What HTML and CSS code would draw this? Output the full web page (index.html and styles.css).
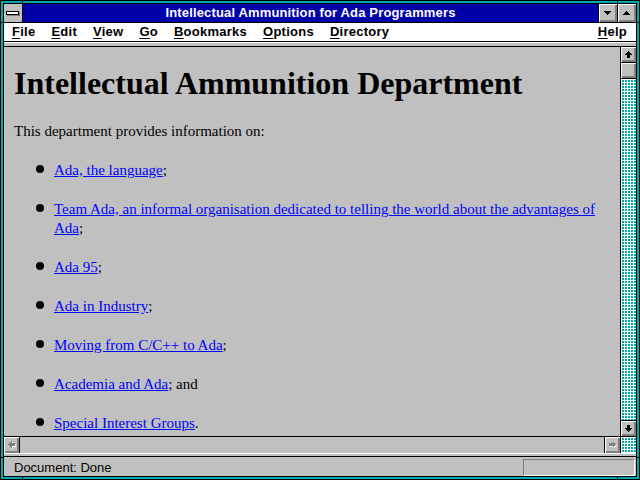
FILE: index.html
```html
<!DOCTYPE html>
<html lang="en">
<head>
    <meta charset="UTF-8">
    <title>Intellectual Ammunition for Ada Programmers</title>
    <link rel="stylesheet" href="styles.css">
</head>
<body>
    <div class="window">
        <div class="inner">
            <!-- title bar -->
            <div class="titlebar">
                <div class="sysbox"><span class="sysbar"></span></div>
                <div class="title">Intellectual Ammunition for Ada Programmers</div>
                <div class="tbtn">
                    <svg width="7" height="4" viewBox="0 0 7 4" shape-rendering="crispEdges"><polygon points="0,0 7,0 3.5,4" fill="#000"/></svg>
                </div>
                <div class="tbtn">
                    <svg width="7" height="4" viewBox="0 0 7 4" shape-rendering="crispEdges"><polygon points="3.5,0 7,4 0,4" fill="#000"/></svg>
                </div>
            </div>

            <!-- menu -->
            <div class="menubar">
                <span class="menu"><u>F</u>ile</span>
                <span class="menu"><u>E</u>dit</span>
                <span class="menu"><u>V</u>iew</span>
                <span class="menu"><u>G</u>o</span>
                <span class="menu"><u>B</u>ookmarks</span>
                <span class="menu"><u>O</u>ptions</span>
                <span class="menu"><u>D</u>irectory</span>
                <span class="menu help"><u>H</u>elp</span>
            </div>
            <div class="strip"></div>

            <!-- document -->
            <div class="view">
                <div class="page">
                    <h1>Intellectual Ammunition Department</h1>
                    <p>This department provides information on:</p>
                    <ul>
                        <li><a href="#">Ada, the language</a>;</li>
                        <li><a href="#">Team Ada, an informal organisation dedicated to telling the world about the advantages of Ada</a>;</li>
                        <li><a href="#">Ada 95</a>;</li>
                        <li><a href="#">Ada in Industry</a>;</li>
                        <li><a href="#">Moving from C/C++ to Ada</a>;</li>
                        <li><a href="#">Academia and Ada</a>; and</li>
                        <li><a href="#">Special Interest Groups</a>.</li>
                    </ul>
                </div>
                <div class="vscroll">
                    <div class="sbtn">
                        <svg width="7" height="7" viewBox="0 0 7 7" shape-rendering="crispEdges"><polygon points="3.5,0 7,4 5,4 5,7 2,7 2,4 0,4" fill="#000"/></svg>
                    </div>
                    <div class="thumb"></div>
                    <div class="track"></div>
                    <div class="sbtn down">
                        <svg width="7" height="7" viewBox="0 0 7 7" shape-rendering="crispEdges"><polygon points="2,0 5,0 5,3 7,3 3.5,7 0,3 2,3" fill="#000"/></svg>
                    </div>
                </div>
            </div>

            <div class="hscroll">
                <div class="hbtn">
                    <svg width="8" height="8" viewBox="0 0 8 8" shape-rendering="crispEdges">
                        <polygon points="1,4.5 4.5,1 4.5,3 8,3 8,6 4.5,6 4.5,8" fill="#fff"/>
                        <polygon points="0,3.5 3.5,0 3.5,2 7,2 7,5 3.5,5 3.5,7" fill="#808080"/>
                    </svg>
                </div>
                <div class="htrack"></div>
                <div class="hbtn right">
                    <svg width="8" height="8" viewBox="0 0 8 8" shape-rendering="crispEdges">
                        <polygon points="1,3 4.5,3 4.5,1 8,4.5 4.5,8 4.5,6 1,6" fill="#fff"/>
                        <polygon points="0,2 3.5,2 3.5,0 7,3.5 3.5,7 3.5,5 0,5" fill="#808080"/>
                    </svg>
                </div>
                <div class="corner"></div>
            </div>
            <div class="strip thin"></div>

            <!-- status -->
            <div class="status">
                <span class="status-text">Document: Done</span>
                <span class="progress"></span>
            </div>
        </div>
    </div>
</body>
</html>
```

FILE: styles.css
```css
* {
    margin: 0;
    padding: 0;
    box-sizing: border-box;
}

body {
    width: 640px;
    height: 480px;
    overflow: hidden;
    font-family: "Liberation Sans", Arial, sans-serif;
}

/* window frame with the corner notches */
.window {
    width: 640px;
    height: 480px;
    border: 1px solid #000;
    padding: 2px;
    background:
        linear-gradient(90deg, transparent 21px, #000 21px, #000 22px, transparent 22px, transparent 616px, #000 616px, #000 617px, transparent 617px),
        linear-gradient(180deg, transparent 21px, #000 21px, #000 22px, transparent 22px, transparent 456px, #000 456px, #000 457px, transparent 457px),
        #00a8a8;
}

.inner {
    height: 100%;
    border: 1px solid #000;
    background: #c0c0c0;
    display: flex;
    flex-direction: column;
}

/* title bar */
.titlebar {
    height: 19px;
    display: flex;
    border-bottom: 1px solid #000;
}

.sysbox {
    width: 19px;
    border-right: 1px solid #000;
    background: #c0c0c0;
    display: flex;
    align-items: center;
    justify-content: center;
}

.sysbar {
    width: 13px;
    height: 4px;
    background: #fff;
    border: 1px solid #000;
    box-shadow: 1px 1px 0 #808080;
    margin: -1px 0 0 -1px;
}

.title {
    flex: 1;
    background: #0000a8;
    color: #fff;
    font-weight: bold;
    font-size: 13px;
    letter-spacing: 0.15px;
    line-height: 18px;
    text-align: center;
    white-space: nowrap;
}

.tbtn {
    width: 19px;
    border-left: 1px solid #000;
    background: #c0c0c0;
    box-shadow: inset 1px 1px #fff, inset -1px -1px #808080, inset -2px -2px #808080;
    display: flex;
    align-items: center;
    justify-content: center;
}

.tbtn svg {
    margin: -1px 0 0 -1px;
}

/* menu bar */
.menubar {
    height: 19px;
    background: #fff;
    border-bottom: 1px solid #000;
    display: flex;
    font-size: 13px;
    font-weight: bold;
    letter-spacing: 0.25px;
    line-height: 18px;
}

.menu {
    padding: 0 8px;
    color: #000;
}

.menu u {
    text-underline-offset: 2px;
}

.help {
    margin-left: auto;
    padding-right: 9px;
}

.strip {
    height: 5px;
    border-top: 1px solid #fff;
    border-bottom: 1px solid #000;
    background: #c0c0c0;
}

.strip.thin {
    height: 4px;
}

/* document area */
.view {
    flex: 1;
    display: flex;
    min-height: 0;
}

.page {
    flex: 1;
    overflow: hidden;
    padding: 0 10px;
    font-family: "Liberation Serif", "Times New Roman", serif;
    font-size: 15px;
    line-height: 19px;
    color: #000;
}

.page h1 {
    font-size: 32px;
    line-height: 37px;
    font-weight: bold;
    margin: 18px 0 20px;
}

.page p {
    margin-bottom: 20px;
}

.page ul {
    list-style: none;
    padding-left: 40px;
}

.page li {
    position: relative;
    margin-bottom: 20px;
}

.page li::before {
    content: '';
    position: absolute;
    left: -18px;
    top: 4px;
    width: 8px;
    height: 8px;
    border-radius: 50%;
    background: #000;
}

.page a {
    color: #0000ff;
    text-decoration: underline;
}

/* scroll bars */
.vscroll {
    width: 16px;
    border-left: 1px solid #000;
    display: flex;
    flex-direction: column;
}

.sbtn {
    height: 16px;
    border-bottom: 1px solid #000;
    background: #c0c0c0;
    box-shadow: inset 1px 1px #fff, inset -1px -1px #808080, inset -2px -2px #808080;
    display: flex;
    align-items: center;
    justify-content: center;
}

.sbtn.down {
    border-bottom: none;
    border-top: 1px solid #000;
}

.thumb {
    height: 16px;
    border-bottom: 1px solid #000;
    background: #c0c0c0;
    box-shadow: inset 1px 1px #fff, inset -1px -1px #808080, inset -2px -2px #808080;
}

.track,
.corner {
    background:
        linear-gradient(90deg, #fff 1px, transparent 1px) 0 0 / 3px 3px,
        linear-gradient(180deg, #fff 1px, transparent 1px) 0 0 / 3px 3px,
        #00a8a8;
}

.track {
    flex: 1;
}

.hscroll {
    height: 17px;
    border-top: 1px solid #000;
    display: flex;
}

.hbtn {
    width: 16px;
    border-right: 1px solid #000;
    background: #c0c0c0;
    box-shadow: inset 1px 1px #fff, inset -1px -1px #808080, inset -2px -2px #808080;
    display: flex;
    align-items: center;
    justify-content: center;
}

.hbtn.right {
    border-right: none;
    border-left: 1px solid #000;
}

.htrack {
    flex: 1;
    background: #c0c0c0;
}

.corner {
    width: 16px;
    border-left: 1px solid #000;
}

/* status bar */
.status {
    height: 19px;
    display: flex;
    align-items: flex-start;
    padding: 2px 1px 0 10px;
    font-size: 13px;
}

.status-text {
    line-height: 15px;
    margin-top: 1px;
    color: #000;
}

.progress {
    margin-left: auto;
    width: 112px;
    height: 17px;
    border: 1px solid;
    border-color: #808080 #fff #fff #808080;
}
```
